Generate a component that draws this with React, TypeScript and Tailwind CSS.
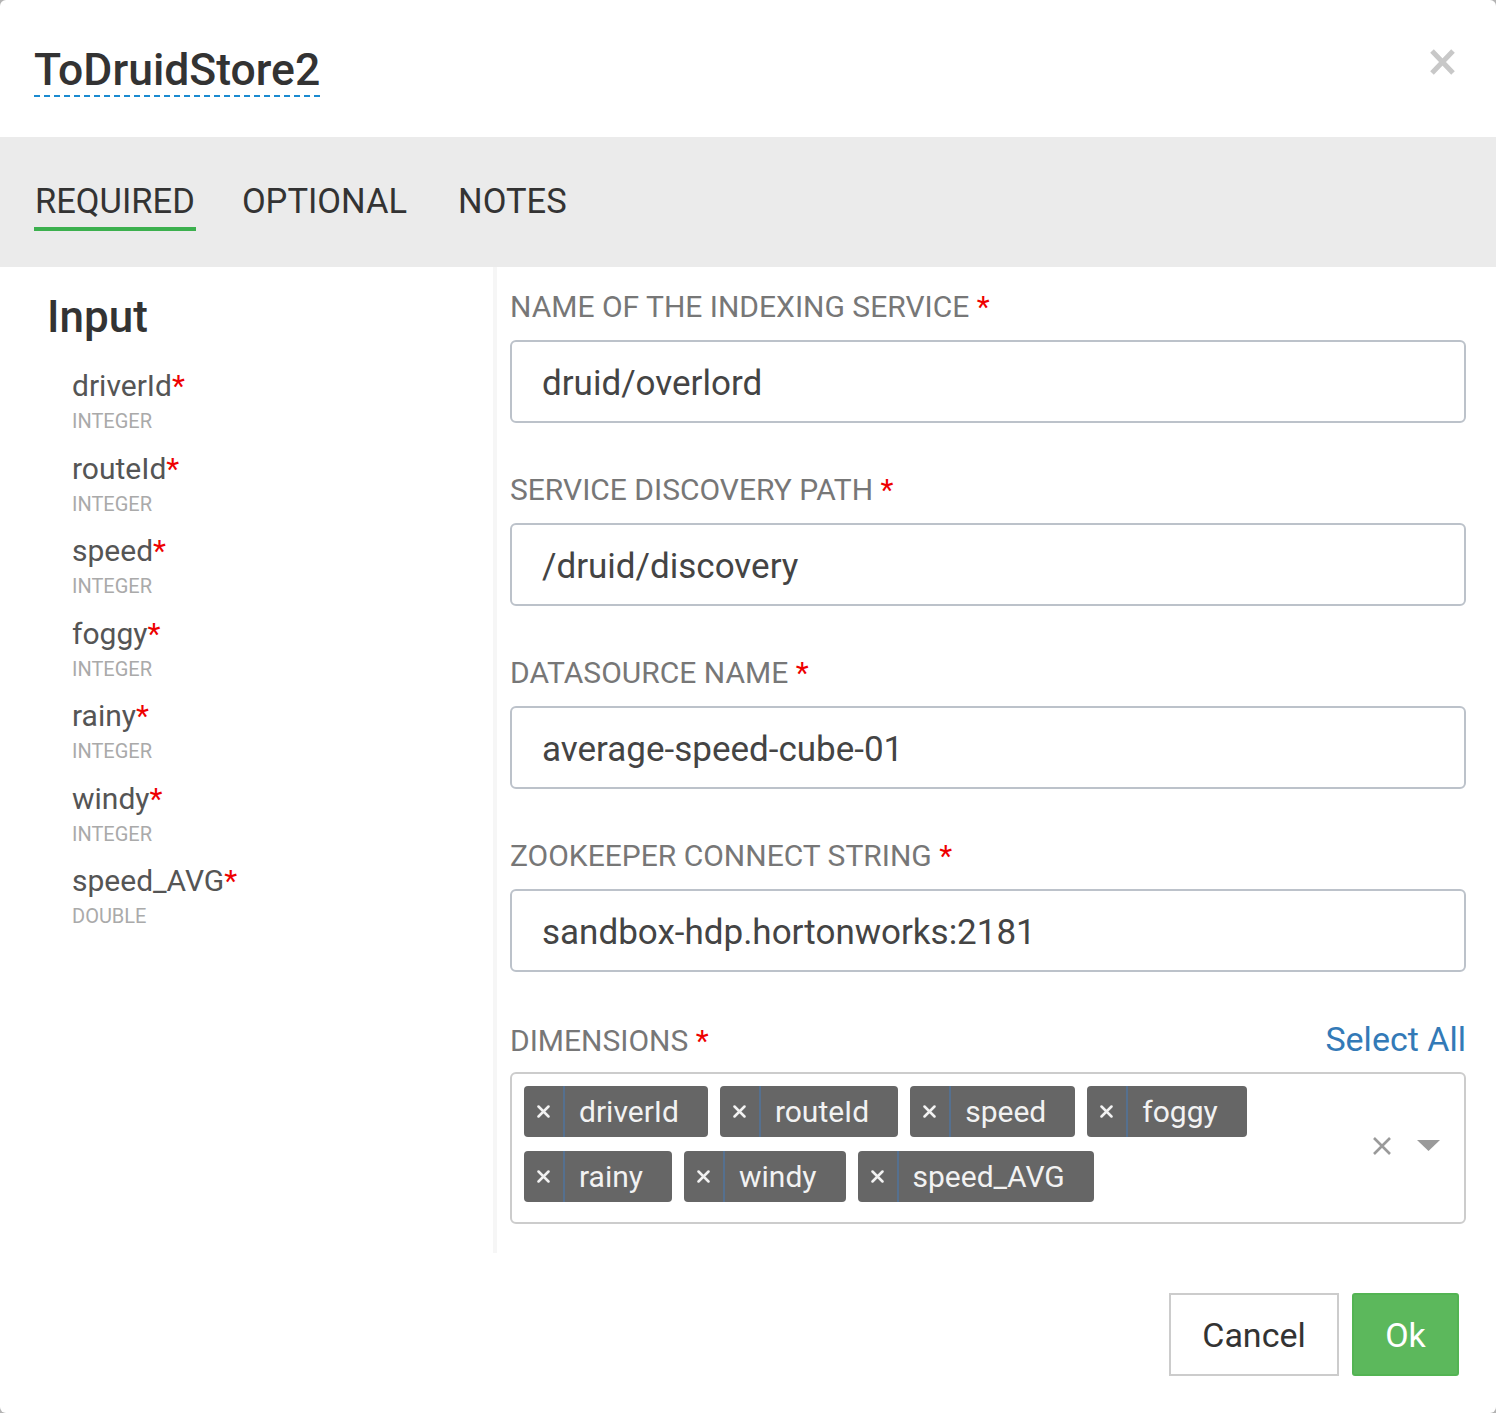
import React from "react";

const inputs: [string, string][] = [
  ["driverId", "INTEGER"],
  ["routeId", "INTEGER"],
  ["speed", "INTEGER"],
  ["foggy", "INTEGER"],
  ["rainy", "INTEGER"],
  ["windy", "INTEGER"],
  ["speed_AVG", "DOUBLE"],
];

const textFields: [string, string][] = [
  ["NAME OF THE INDEXING SERVICE", "druid/overlord"],
  ["SERVICE DISCOVERY PATH", "/druid/discovery"],
  ["DATASOURCE NAME", "average-speed-cube-01"],
  ["ZOOKEEPER CONNECT STRING", "sandbox-hdp.hortonworks:2181"],
];

const dimensions = ["driverId", "routeId", "speed", "foggy", "rainy", "windy", "speed_AVG"];

function FieldLabel({ text }: { text: string }) {
  return (
    <div className="text-[30px] leading-none text-[#777]">
      {text} <span className="text-[#e00]">*</span>
    </div>
  );
}

function Chip({ label }: { label: string }) {
  return (
    <div className="flex h-[51px] items-stretch overflow-hidden rounded-[4px] bg-[#666] text-[#f2f2f2]">
      <div className="flex w-[41px] items-center justify-center border-r-2 border-[#55708f]">
        <svg width="13" height="13" viewBox="0 0 13 13">
          <path d="M1.5 1.5l10 10M11.5 1.5l-10 10" stroke="#f2f2f2" strokeWidth="2.5" strokeLinecap="round" />
        </svg>
      </div>
      <div className="flex items-center pl-[14px] pr-[29px] text-[30px] leading-none">{label}</div>
    </div>
  );
}

export default function App() {
  return (
    <div className="min-h-[1413px] w-[1496px] bg-[#b3b3b3] font-[Roboto,sans-serif]">
      <div className="h-[1413px] w-[1496px] overflow-hidden rounded-[6px] bg-white">
        {/* header */}
        <div className="flex h-[137px] items-start justify-between pl-[34px] pr-[40px] pt-[48px]">
          <div className="border-b-2 border-dashed border-[#1a8ad0] pb-[3px] text-[44.5px] font-medium leading-[44px] text-[#333]">
            ToDruidStore2
          </div>
          <svg width="27" height="28" viewBox="0 0 27 28">
            <path d="M3 3l21 22M24 3L3 25" stroke="#c8c8c8" strokeWidth="5" />
          </svg>
        </div>

        {/* tabs */}
        <div className="flex h-[130px] gap-[46px] bg-[#ebebeb] pl-[34px] pt-[47px] text-[34.5px] leading-none text-[#333]">
          <div className="h-[47px] border-b-4 border-[#3cb04e] pl-[1px] pr-[1px]">REQUIRED</div>
          <div>OPTIONAL</div>
          <div className="ml-[5px]">NOTES</div>
        </div>

        {/* body */}
        <div className="flex">
          <div className="h-[986px] w-[497px] shrink-0 border-r-4 border-[#f6f6f6] pl-[47px] pt-[28px]">
            <div className="text-[44px] font-medium leading-none text-[#333]">Input</div>
            <div className="mt-[30px] flex flex-col gap-[18.5px] pl-[25px]">
              {inputs.map(([name, type]) => (
                <div key={name}>
                  <div className="text-[30px] leading-[34px] text-[#555]">
                    {name}
                    <span className="text-[#e00]">*</span>
                  </div>
                  <div className="mt-[6px] text-[20px] leading-[24px] text-[#aaa]">{type}</div>
                </div>
              ))}
            </div>
          </div>

          <div className="flex-1 pl-[13px] pr-[30px] pt-[25px]">
            {textFields.map(([label, value]) => (
              <div key={label} className="mb-[52px]">
                <FieldLabel text={label} />
                <div className="mt-[18px] flex h-[83px] items-center rounded-[6px] border-2 border-[#bcc2ca] pl-[30px] pt-[3px] text-[35px] leading-none text-[#444]">
                  {value}
                </div>
              </div>
            ))}

            <div className="flex h-[30px] items-baseline justify-between">
              <FieldLabel text="DIMENSIONS" />
              <div className="text-[34px] leading-[30px] text-[#337ab7]">Select All</div>
            </div>
            <div className="mt-[18px] flex h-[152px] rounded-[6px] border-2 border-[#cccccc] pl-[12px] pr-[24px]">
              <div className="flex flex-1 flex-wrap content-start gap-x-[12px] gap-y-[14px] pt-[12px] pr-[10px]">
                {dimensions.map((d) => (
                  <Chip key={d} label={d} />
                ))}
              </div>
              <div className="flex items-center gap-[25px] pb-[4px]">
                <svg width="20" height="20" viewBox="0 0 20 20">
                  <path d="M2 2l16 16M18 2L2 18" stroke="#9a9a9a" strokeWidth="2.6" />
                </svg>
                <svg width="23" height="12" viewBox="0 0 23 12">
                  <path d="M0 0h23L11.5 11z" fill="#9a9a9a" />
                </svg>
              </div>
            </div>
          </div>
        </div>

        {/* footer */}
        <div className="flex justify-end gap-[13px] pr-[37px] pt-[40px]">
          <button className="h-[83px] w-[170px] border-2 border-[#cccccc] bg-white text-[34px] leading-none text-[#333]">
            Cancel
          </button>
          <button className="h-[83px] w-[107px] rounded-[3px] border-2 border-[#53b453] bg-[#5cb85c] text-[34px] leading-none text-white">
            Ok
          </button>
        </div>
      </div>
    </div>
  );
}
